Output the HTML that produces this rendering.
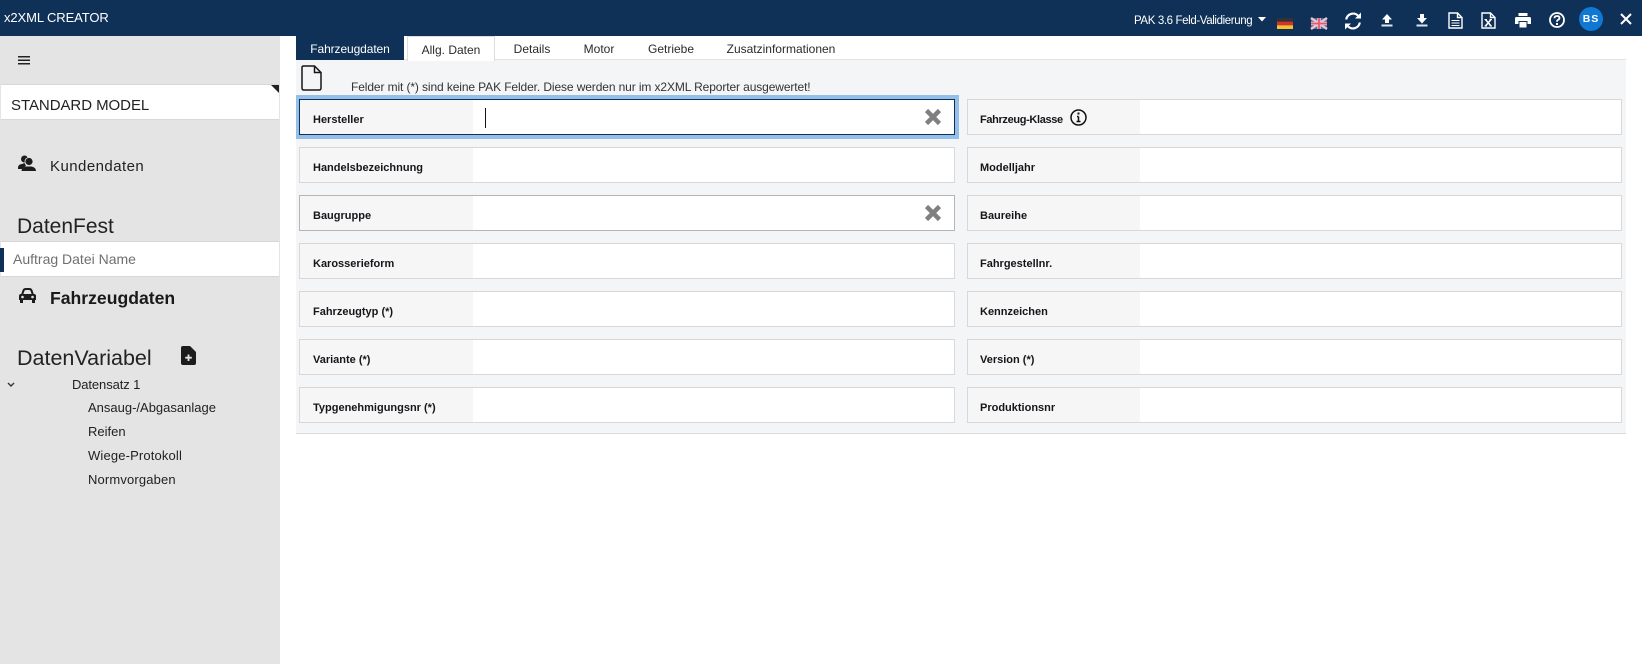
<!DOCTYPE html>
<html><head><meta charset="utf-8">
<style>
html,body{margin:0;padding:0;width:1642px;height:664px;overflow:hidden;background:#fff}
body{position:relative;font-family:"Liberation Sans","Noto Sans CJK JP",sans-serif;color:#1b1b1f}
.a{position:absolute;white-space:nowrap}
svg{position:absolute;overflow:visible}
#hd{left:0;top:0;width:1642px;height:36px;background:#0f3057}
#sb{left:0;top:36px;width:280px;height:628px;background:#e4e4e4}
.tab{font-size:12px;top:36px;height:24px;line-height:26px;color:#2a2a2a;text-align:center}
.f{position:absolute;height:36px;box-sizing:border-box;border:1px solid #d8d8d8;background:#fff}
.f i{position:absolute;left:0;top:0;bottom:0;background:#f6f6f7}
.f b{position:absolute;left:13px;top:0;line-height:40px;font-size:11px;color:#16161a;white-space:nowrap}
.l{left:299px;width:656px}.l i{width:173px}
.r{left:967px;width:655px}.r i{width:172px}.r b{left:12px}
.x{position:absolute;right:12px;top:8px;width:18px;height:18px}
.tree{font-size:13px;color:#1f1f23}
</style></head><body>
<div class="a" id="hd"></div>
<div class="a" style="left:4px;top:8px;font-size:13px;letter-spacing:-.1px;color:#fff;line-height:20px">x2XML CREATOR</div>
<div class="a" style="left:1134px;top:11px;font-size:11.5px;color:#fff;line-height:20px;letter-spacing:-.38px">PAK 3.6 Feld-Validierung</div>
<svg style="left:1258px;top:17px" width="8" height="5"><path d="M0 0h8L4 4.5z" fill="#fff"/></svg>
<svg style="left:1277px;top:18px" width="16" height="11"><rect width="16" height="3.7" fill="#333"/><rect y="3.7" width="16" height="3.6" fill="#d8322a"/><rect y="7.3" width="16" height="3.7" fill="#f4c430"/></svg>
<svg style="left:1311px;top:18px" width="16" height="11"><rect width="16" height="11" fill="#5566a0"/><path d="M0 0L16 11M16 0L0 11" stroke="#e8c8d0" stroke-width="2.4"/><path d="M8 0v11M0 5.5h16" stroke="#e8c8d0" stroke-width="3.6"/><path d="M8 0v11M0 5.5h16" stroke="#e85a6a" stroke-width="1.8"/></svg>
<svg style="left:1344px;top:12px" width="18" height="18" viewBox="0 0 18 18" fill="none" stroke="#fff" stroke-width="2.2"><path d="M2.2 7.5A7 7 0 0 1 14 3.6"/><path d="M15.8 10.5A7 7 0 0 1 4 14.4"/><path d="M17 0.5V6.5H11z" fill="#fff" stroke="none"/><path d="M1 17.5V11.5H7z" fill="#fff" stroke="none"/></svg>
<svg style="left:1381px;top:14px" width="12" height="13" viewBox="0 0 12 13" fill="#fff"><path d="M6 0L11 5.5H8V9H4V5.5H1z"/><rect x="0.5" y="10.5" width="11" height="2" fill="#dfe3ea"/></svg>
<svg style="left:1416px;top:14px" width="12" height="13" viewBox="0 0 12 13" fill="#fff"><path d="M4 0H8V4H11L6 9.5L1 4H4z"/><rect x="0.5" y="10.5" width="11" height="2" fill="#dfe3ea"/></svg>
<svg style="left:1448px;top:12px" width="15" height="17" viewBox="0 0 15 17" fill="none" stroke="#fff" stroke-width="1.4"><path d="M1 1H9.5L14 5.5V16H1z"/><path d="M9.5 1V5.5H14" /><path d="M3.5 8.5H11.5M3.5 11H11.5M3.5 13.5H11.5" stroke-width="1.1"/></svg>
<svg style="left:1481px;top:12px" width="15" height="17" viewBox="0 0 15 17" fill="none" stroke="#fff" stroke-width="1.4"><path d="M1 1H9.5L14 5.5V16H1z"/><path d="M9.5 1V5.5H14"/><path d="M4.5 7.5L10 14M10 7.5L4.5 14" stroke-width="1.6"/><path d="M3.5 7.5H6M8.500 7.500H11M3.500 14H6M8.500 14H11" stroke-width="1"/></svg>
<svg style="left:1515px;top:13px" width="16" height="15" viewBox="0 0 16 15" fill="#fff"><rect x="3.5" y="0" width="9" height="3"/><path d="M1.5 4H14.5Q16 4 16 5.5V11H12.5V8H3.5V11H0V5.5Q0 4 1.500 4z"/><rect x="4.500" y="9" width="7" height="5.500"/></svg>
<svg style="left:1549px;top:12px" width="16" height="16" viewBox="0 0 16 16" fill="none" stroke="#fff"><circle cx="8" cy="8" r="7" stroke-width="1.800"/><path d="M5.500 6.300Q5.500 4 8 4Q10.500 4 10.500 6Q10.500 7.300 8.800 8Q8 8.400 8 9.800" stroke-width="1.800"/><rect x="7" y="11" width="2" height="2" fill="#fff" stroke="none"/></svg>
<div class="a" style="left:1579px;top:7px;width:24px;height:24px;border-radius:50%;background:#0f78d4;color:#fff;font-size:10.500px;font-weight:bold;text-align:center;line-height:24px;letter-spacing:1px">BS</div>
<svg style="left:1620px;top:13px" width="12" height="12" viewBox="0 0 12 12" stroke="#fff" stroke-width="2"><path d="M1 1L11 11M11 1L1 11"/></svg>

<div class="a" id="sb"></div>
<svg style="left:18px;top:56px" width="12" height="9" fill="#222"><rect width="12" height="1.500"/><rect y="3.500" width="12" height="1.500"/><rect y="7" width="12" height="1.500"/></svg>
<div class="a" style="left:1px;top:84px;width:278px;height:34px;background:#fff;border-bottom:1px solid #d8d8d8;border-top:1px solid #d8d8d8"></div>
<svg style="left:271px;top:85px" width="8" height="8"><path d="M0 0H8V8z" fill="#222"/></svg>
<div class="a" style="left:11px;top:96px;font-size:15px;letter-spacing:-.05px;line-height:20px;color:#222">STANDARD MODEL</div>
<svg style="left:18px;top:155px" width="18" height="16" viewBox="0 0 18 16" fill="#1d1d1d"><circle cx="6.500" cy="4" r="3.500"/><path d="M0 12.500Q0 9.500 4 9L6.500 8L8 11L4 14H0z"/><circle cx="11" cy="6.500" r="4" stroke="#e4e4e4" stroke-width=".8"/><path d="M3.500 16Q3.500 12.500 8.500 11.500H13.500Q18 12.500 18 16z"/></svg>
<div class="a" style="left:50px;top:157px;font-size:15px;letter-spacing:.45px;line-height:20px;color:#222">Kundendaten</div>
<div class="a" style="left:17px;top:214px;font-size:21px;line-height:26px;color:#222">DatenFest</div>
<div class="a" style="left:1px;top:241px;width:278px;height:34px;background:#fff;border-top:1px solid #d8d8d8;border-bottom:1px solid #d8d8d8"></div>
<div class="a" style="left:0;top:248px;width:4px;height:24px;background:#0f3057"></div>
<div class="a" style="left:13px;top:249px;font-size:14px;line-height:20px;color:#6f6f6f">Auftrag Datei Name</div>
<svg style="left:18px;top:288px" width="19" height="16" viewBox="0 0 19 16"><path d="M4 7L5.500 2.500Q6 1 8 1H11Q13 1 13.500 2.500L15 7" fill="none" stroke="#1c1c1c" stroke-width="2"/><path d="M1 8Q1 6 3 6H16Q18 6 18 8V12H1z" fill="#1c1c1c"/><rect x="2" y="12" width="3" height="3" fill="#1c1c1c"/><rect x="14" y="12" width="3" height="3" fill="#1c1c1c"/><circle cx="4.500" cy="9" r="1.300" fill="#e4e4e4"/><circle cx="14.500" cy="9" r="1.300" fill="#e4e4e4"/></svg>
<div class="a" style="left:50px;top:287px;font-size:17.6px;font-weight:bold;line-height:22px;color:#1a1a1a">Fahrzeugdaten</div>
<div class="a" style="left:17px;top:344px;font-size:21.5px;line-height:28px;color:#222">DatenVariabel</div>
<svg style="left:181px;top:346px" width="15" height="19" viewBox="0 0 15 19"><path d="M2 0H9L15 6V17Q15 19 13 19H2Q0 19 0 17V2Q0 0 2 0z" fill="#1c1c1c"/><path d="M7.500 8.500V15M4.200 11.700H10.800" stroke="#e4e4e4" stroke-width="1.800"/></svg>
<svg style="left:7px;top:382px" width="8" height="6" fill="none" stroke="#333" stroke-width="1.400"><path d="M1 1L4 4L7 1"/></svg>
<div class="a tree" style="left:72px;top:376px;line-height:18px;letter-spacing:-.1px">Datensatz 1</div>
<div class="a tree" style="left:88px;top:399px;line-height:18px">Ansaug-/Abgasanlage</div>
<div class="a tree" style="left:88px;top:423px;line-height:18px">Reifen</div>
<div class="a tree" style="left:88px;top:447px;line-height:18px;letter-spacing:.15px">Wiege-Protokoll</div>
<div class="a tree" style="left:88px;top:471px;line-height:18px;letter-spacing:.15px">Normvorgaben</div>

<div class="a" style="left:296px;top:60px;width:1330px;height:373px;background:#f4f5f7;border-bottom:1px solid #dcdcdc"></div>
<div class="a" style="left:296px;top:59px;width:1330px;height:1px;background:#e2e2e2"></div>
<div class="a tab" style="left:296px;width:108px;background:#0f3057;color:#fff;letter-spacing:-.1px">Fahrzeugdaten</div>
<div class="a tab" style="left:407px;width:88px;height:25px;box-sizing:border-box;border:1px solid #dedede;border-bottom:0;line-height:26px;background:#fff">Allg. Daten</div>
<div class="a tab" style="left:507px;width:50px">Details</div>
<div class="a tab" style="left:570px;width:58px">Motor</div>
<div class="a tab" style="left:633px;width:76px">Getriebe</div>
<div class="a tab" style="left:706px;width:150px">Zusatzinformationen</div>

<svg style="left:301px;top:65px" width="21" height="26" viewBox="0 0 21 26" fill="none" stroke="#161616" stroke-width="1.500"><path d="M2.500 1H13.500L20 7.500V23Q20 25 18 25H3Q1 25 1 23V2.500Q1 1 2.500 1z"/><path d="M13.500 1V7.500H20"/></svg>
<div class="a" style="left:351px;top:78px;font-size:12px;letter-spacing:-.11px;line-height:18px;color:#333">Felder mit (*) sind keine PAK Felder. Diese werden nur im x2XML Reporter ausgewertet!</div>

<div class="a" style="left:296px;top:95px;width:663px;height:44px;background:#93bfe8"></div>
<div class="f l" style="top:99px;height:36px;border:1px solid #0f3057;border-width:1px"><i></i><b>Hersteller</b>
<div style="position:absolute;left:185px;top:8px;width:1px;height:20px;background:#111"></div>
<svg class="x" viewBox="0 0 18 18" stroke="#808080" stroke-width="4.500"><path d="M2.500 2.500L15.500 15.500M15.500 2.500L2.500 15.500"/></svg></div>
<div class="f l" style="top:147px"><i></i><b>Handelsbezeichnung</b></div>
<div class="f l" style="top:195px;border-color:#b5b5b5"><i></i><b>Baugruppe</b>
<svg class="x" viewBox="0 0 18 18" stroke="#808080" stroke-width="4.500"><path d="M2.500 2.500L15.500 15.500M15.500 2.500L2.500 15.500"/></svg></div>
<div class="f l" style="top:243px"><i></i><b>Karosserieform</b></div>
<div class="f l" style="top:291px"><i></i><b>Fahrzeugtyp (*)</b></div>
<div class="f l" style="top:339px"><i></i><b>Variante (*)</b></div>
<div class="f l" style="top:387px"><i></i><b>Typgenehmigungsnr (*)</b></div>

<div class="f r" style="top:99px"><i></i><b style="letter-spacing:-.35px">Fahrzeug-Klasse</b>
<svg style="left:102px;top:9px" width="17" height="17" viewBox="0 0 17 17" fill="none" stroke="#111"><circle cx="8.500" cy="8.500" r="7.500" stroke-width="1.500"/><path d="M8.500 7.500V12.500M6.500 12.500H10.500M7 7.500H8.500" stroke-width="1.500"/><rect x="7.500" y="3.500" width="2" height="2" fill="#111" stroke="none"/></svg></div>
<div class="f r" style="top:147px"><i></i><b>Modelljahr</b></div>
<div class="f r" style="top:195px"><i></i><b>Baureihe</b></div>
<div class="f r" style="top:243px"><i></i><b>Fahrgestellnr.</b></div>
<div class="f r" style="top:291px"><i></i><b>Kennzeichen</b></div>
<div class="f r" style="top:339px"><i></i><b>Version (*)</b></div>
<div class="f r" style="top:387px"><i></i><b>Produktionsnr</b></div>
</body></html>
